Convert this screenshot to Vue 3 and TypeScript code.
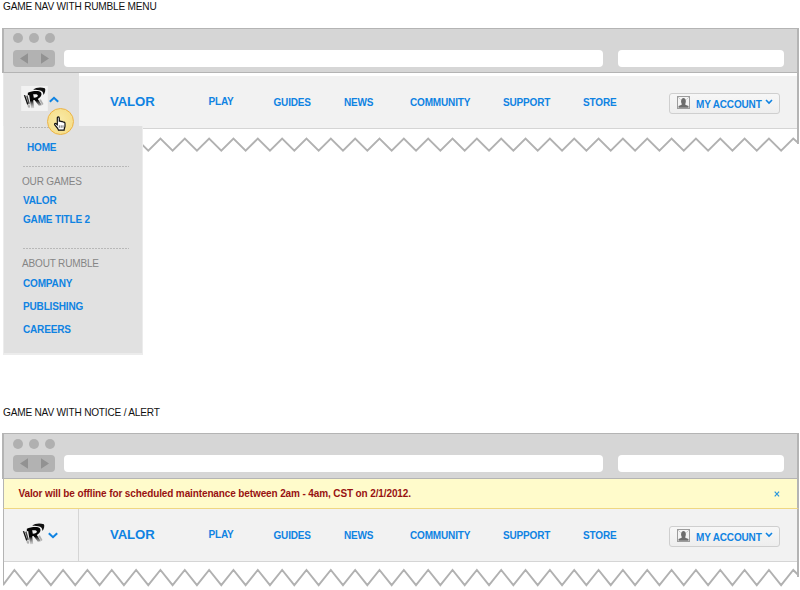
<script setup lang="ts">
interface NavLink {
  label: string
  slot: string
}

interface Frame {
  id: string
  title: string
  menuOpen: boolean
  notice: string
  zigzag: string
}

const links: NavLink[] = [
  { label: 'PLAY', slot: 'play' },
  { label: 'GUIDES', slot: 'guides' },
  { label: 'NEWS', slot: 'news' },
  { label: 'COMMUNITY', slot: 'community' },
  { label: 'SUPPORT', slot: 'support' },
  { label: 'STORE', slot: 'store' },
]

// Builds the torn lower edge of a browser frame.
function tornEdge(top: number, bottom: number, end: number): string {
  const step = 12.17
  const points: string[] = [`0,${bottom}`]
  for (let i = 0; i < 65; i++) {
    const x = 11.4 + i * step
    if (x > 793) break
    points.push(`${x.toFixed(2)},${i % 2 === 0 ? top : bottom}`)
  }
  points.push(`795.3,${end}`)
  return points.join(' ')
}

const frames: Frame[] = [
  { id: 'menu', title: 'GAME NAV WITH RUMBLE MENU', menuOpen: true, notice: '', zigzag: tornEdge(9.5, 21.7, 14) },
  {
    id: 'alert',
    title: 'GAME NAV WITH NOTICE / ALERT',
    menuOpen: false,
    notice: 'Valor will be offline for scheduled maintenance between 2am - 4am, CST on 2/1/2012.',
    zigzag: tornEdge(8, 23.2, 13),
  },
]
</script>

<template>
  <main class="page">
    <section v-for="frame in frames" :key="frame.id" class="frame" :class="frame.id">
      <h2 class="title">{{ frame.title }}</h2>
      <div class="browser">
        <div class="chrome">
          <div class="lights"><i></i><i></i><i></i></div>
          <div class="bar">
            <svg class="arrows" viewBox="0 0 42 17" width="42" height="17">
              <path d="M15 3.3v10.4L7 8.5zM28 3.3v10.4l8-5.2z" fill="#929292" />
            </svg>
            <span class="field address"></span>
            <span class="field search"></span>
          </div>
        </div>

        <div v-if="frame.notice" class="notice">
          <span>{{ frame.notice }}</span>
          <svg width="6" height="6" viewBox="0 0 6 6"><path d="M.7.7l4.4 4.6M5.1.7L.7 5.3" stroke="#2b97dc" stroke-width="1.2" /></svg>
        </div>

        <nav class="nav">
          <div class="brand">
            <svg class="logo" viewBox="0 0 80 75" width="27" height="25">
              <defs>
                <linearGradient :id="'fade-' + frame.id" x1="0" y1="0" x2="0" y2="1">
                  <stop offset=".55" stop-color="#050505" />
                  <stop offset="1" stop-color="#999" stop-opacity=".3" />
                </linearGradient>
              </defs>
              <rect class="tile" width="80" height="75" />
              <path d="M36 11C44 4 60 3 71 7c3 4 1 14-4 20-1-7-2-11-7-13-7-3-15-3-24-3z" fill="#111" />
              <path d="M8 28l4-1 10 28-4 1z" fill="#111" />
              <path d="M15 30l4-2 7 25-4 1z" fill="#444" />
              <path
                d="M20 20c12-5 34-7 39-1 5 7 0 15-9 20l12 19-9 1-13-17-4 1 3 23-9 1-6-40-4 1zM36 25l2 10c8 0 13-3 12-7-1-4-7-4-14-3z"
                :fill="`url(#fade-${frame.id})`"
                fill-rule="evenodd"
              />
              <path d="M18 59l7-4 2 9-4 2zM54 42l5-2 8 14-4 3z" fill="#777" opacity=".55" />
            </svg>
            <svg class="chevron" viewBox="0 0 10 7" width="10" height="7">
              <path :d="frame.menuOpen ? 'M.8 5.8L5 1.8l4.2 4' : 'M.8 1.2l4.2 4 4.2-4'" />
            </svg>
          </div>
          <strong class="game">VALOR</strong>
          <a v-for="link in links" :key="link.slot" class="link" :class="link.slot">{{ link.label }}</a>
          <button class="account">
            <svg class="avatar" viewBox="0 0 13 13" width="13" height="13">
              <rect x=".5" y=".5" width="12" height="12" fill="#f4f4f4" stroke="#9c9c9c" />
              <path d="M1.5 11.8v-1.8l3.2-1.3-.1-1.2C3.7 6 3.9 2.1 6.5 2.1S9.3 6 8.4 7.5l-.1 1.2 3.2 1.3v1.8z" fill="#6d6d6d" />
              <path d="M1 1l2.5 2.5M12 1L9.5 3.5" stroke="#bbb" stroke-width=".7" />
            </svg>
            <span>MY ACCOUNT</span>
            <svg class="chevron small" viewBox="0 0 8 6" width="8" height="6"><path d="M1 1l3 3 3-3" /></svg>
          </button>
        </nav>

        <svg class="torn" viewBox="0 0 796 27" width="796" height="27">
          <polyline :points="frame.zigzag" fill="none" stroke="#b1b1b1" stroke-width="1.9" />
        </svg>

        <aside v-if="frame.menuOpen" class="menu">
          <a class="home">HOME</a>
          <div class="group games">
            <h3>OUR GAMES</h3>
            <a>VALOR</a>
            <a>GAME TITLE 2</a>
          </div>
          <div class="group about">
            <h3>ABOUT RUMBLE</h3>
            <a>COMPANY</a>
            <a>PUBLISHING</a>
            <a>CAREERS</a>
          </div>
        </aside>

        <span v-if="frame.menuOpen" class="pointer">
          <svg viewBox="0 0 14 16" width="14" height="16">
            <path
              d="M4.3 8.7V2.2c0-1.7 2-1.7 2 0v3.5c.2-1 1.9-.8 1.9.3.4-.9 1.9-.6 1.9.5.4-.8 1.9-.5 1.9.9v2.7c0 1.5-.9 2.4-.9 4.1H5.5C5.3 12.4 3 10.7 1.8 8.9c-.8-1.3.5-2 1.4-1.2z"
              fill="#fff"
              stroke="#111"
              stroke-width="1.2"
            />
            <path d="M6.3 9.3v2.5M8.2 9.3v2.5M10 9.3v2.5" stroke="#333" stroke-width=".7" />
          </svg>
        </span>
      </div>
    </section>
  </main>
</template>

<style>
body {
  margin: 0;
  background: #fff;
}
</style>

<style scoped>
.page {
  width: 800px;
  height: 590px;
  overflow: hidden;
  font-family: 'Liberation Sans', Arial, sans-serif;
  font-size: 10px;
  letter-spacing: -0.16px;
  line-height: 12px;
}
.frame {
  height: 405px;
}
.title {
  margin: 0;
  padding-left: 3px;
  height: 28px;
  font-size: 10.1px;
  letter-spacing: -0.2px;
  font-weight: 400;
  line-height: 13px;
  color: #111;
  box-sizing: border-box;
}
.alert .title {
  padding-top: 1px;
}
.browser {
  position: relative;
  width: 797px;
  margin-left: 2px;
}
.chrome {
  box-sizing: border-box;
  height: 45px;
  border: solid #b4b4b4;
  border-width: 1px 2px 1px 2px;
  background: #d6d6d6;
  padding: 4px 0 0 9px;
}
.alert .chrome {
  height: 46px;
  padding-top: 5px;
}
.lights {
  display: flex;
  gap: 6px;
}
.lights i {
  width: 10px;
  height: 10px;
  border-radius: 50%;
  background: #b0b0b0;
}
.bar {
  display: flex;
  align-items: center;
  margin-top: 7px;
}
.arrows {
  background: #b2b2b2;
  border-radius: 4px;
}
.field {
  height: 17px;
  background: #fff;
  border-radius: 4px;
}
.address {
  width: 539px;
  margin-left: 9px;
}
.search {
  width: 166px;
  margin-left: 15px;
}
.alert .bar {
  margin-top: 6px;
}
.notice {
  box-sizing: border-box;
  height: 30px;
  margin-left: 1px;
  padding: 0 17px 0 14.5px;
  display: flex;
  align-items: center;
  justify-content: space-between;
  border: solid #b4b4b4;
  border-width: 0 2px 1px 1px;
  background: #fffbcb;
  border-bottom-color: #efd782;
  color: #981212;
  font-weight: 700;
}
.notice {
  letter-spacing: -0.12px;
}
.nav {
  box-sizing: border-box;
  height: 56px;
  padding-top: 3px;
  margin-left: 1px;
  border: solid #b4b4b4;
  border-width: 0 2px 0 1px;
  display: grid;
  grid-template-columns: 106px 98.5px 65px 70.5px 66px 93px 80px 86px 111px;
  background: linear-gradient(#fff 3px, #f2f2f2 3px, #f2f2f2 55px, #d5d5d5 55px);
  color: #0f83e2;
}
.alert .nav {
  height: 53px;
  padding-top: 0;
  background: linear-gradient(#f2f2f2 52px, #d5d5d5 52px);
}
.brand {
  box-sizing: border-box;
  width: 75px;
  height: 52px;
  padding: 10px 0 0 17px;
  display: flex;
  align-items: flex-start;
  border-right: 1px solid #d5d5d5;
}
.menu .nav {
  border-left-color: #e8e8e8;
}
.menu .brand {
  margin-top: -3px;
  height: 56px;
  padding-top: 13px;
  background: #e1e1e1;
  border: 0;
}
.alert .logo {
  margin-top: 3px;
  margin-left: -1px;
}
.tile {
  fill: #f2f2f2;
}
.chevron {
  margin: 11px 0 0 2px;
  fill: none;
  stroke: #0f83e2;
  stroke-width: 2;
}
.menu .brand .chevron {
  margin-top: 10px;
  margin-left: 1px;
}
.alert .brand .chevron {
  margin-top: 13px;
  margin-left: 1px;
}
.game {
  font-size: 13.2px;
  letter-spacing: -0.12px;
  line-height: 16px;
  padding-top: 18px;
}
.link {
  font-weight: 700;
  padding-top: 21px;
}
.play {
  padding-top: 20px;
}
.account {
  box-sizing: border-box;
  width: 111px;
  height: 21px;
  margin: 17px 0 0 0;
  padding: 0 6px 0 7px;
  display: flex;
  align-items: center;
  border: 1px solid #cfcfcf;
  border-radius: 3px;
  background: linear-gradient(#f7f7f7, #eee);
  color: #0f83e2;
  font: 700 10px/12px 'Liberation Sans', Arial, sans-serif;
  letter-spacing: -0.16px;
}
.avatar {
  margin-bottom: 2px;
}
.account span {
  margin: 2px 0 0 6px;
  white-space: nowrap;
}
.account .small {
  margin: 0 0 3px auto;
  stroke-width: 1.6;
}
.torn {
  display: block;
  box-sizing: border-box;
  margin-left: 1px;
}
.menu .browser .torn,
.alert .torn {
  background:
    linear-gradient(#b4b4b4, #b4b4b4) right 0 top 0 / 2px 15px no-repeat,
    linear-gradient(#b1b1b1, #b1b1b1) left 0 top 0 / 1px 23px no-repeat;
}
.menu .menu {
  position: absolute;
  left: 1px;
  top: 98px;
  box-sizing: border-box;
  width: 140px;
  height: 229px;
  padding: 0 13px 0 19px;
  border: solid #ececec;
  border-width: 0 1px 2px 1px;
  background:
    repeating-linear-gradient(90deg, #b8b8b8 0 2px, transparent 2px 3px) 16px 1px / 36px 1px no-repeat,
    #e1e1e1;
  font-weight: 700;
  color: #0f83e2;
}
.menu .menu a {
  display: block;
}
.home {
  height: 24px;
  padding: 16px 0 0 4px;
}
.group {
  padding-top: 10px;
  background: repeating-linear-gradient(90deg, #b8b8b8 0 2px, transparent 2px 3px) 0 0 / 106px 1px no-repeat;
}
.group h3 {
  margin: 0 0 7px -1px;
  font-size: 10px;
  font-weight: 400;
  color: #858585;
}
.games {
  height: 72px;
}
.games a {
  margin-bottom: 7px;
}
.about h3 {
  margin-bottom: 8px;
}
.about a {
  margin-bottom: 11px;
}
.pointer {
  position: absolute;
  left: 44.5px;
  top: 80px;
  box-sizing: border-box;
  width: 27px;
  height: 27px;
  border: 1.5px solid #edb344;
  border-radius: 50%;
  background: radial-gradient(circle at 45% 45%, #f9eaa7, #f4da80);
  display: flex;
  align-items: center;
  justify-content: center;
  padding-top: 4px;
}
</style>
